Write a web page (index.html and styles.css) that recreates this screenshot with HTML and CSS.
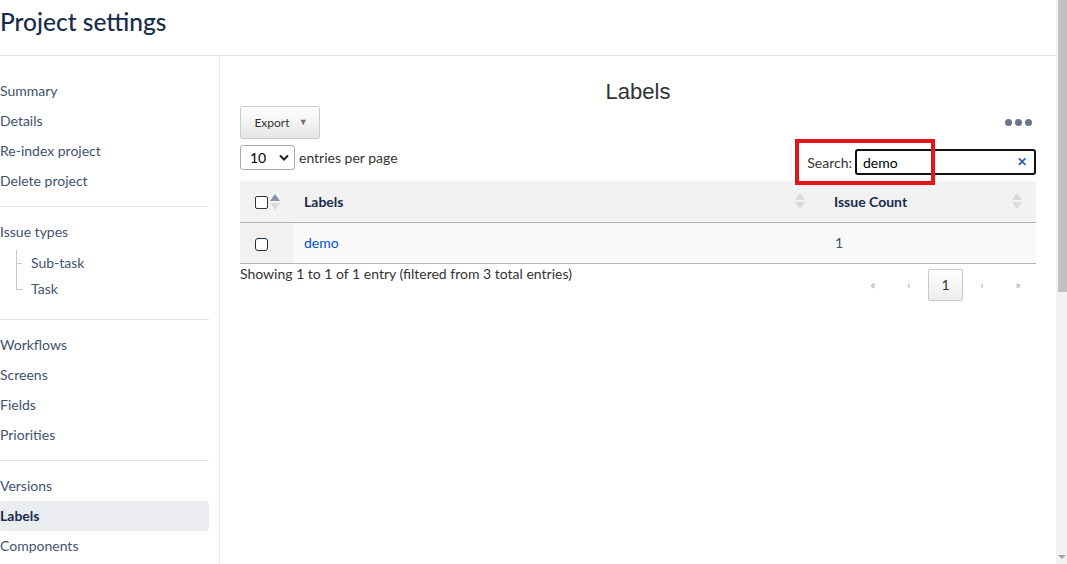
FILE: index.html
```html
<!DOCTYPE html>
<html lang="en">
<head>
    <meta charset="UTF-8">
    <meta name="viewport" content="width=device-width, initial-scale=1.0">
    <title>Project settings - Labels</title>
    <link rel="stylesheet" href="styles.css">
</head>
<body>
    <div class="page">
        <div class="page-header">
            <h1>Project settings</h1>
        </div>

        <div class="layout">
            <!-- Left navigation -->
            <nav class="sidebar">
                <ul class="nav-group">
                    <li>Summary</li>
                    <li>Details</li>
                    <li>Re-index project</li>
                    <li>Delete project</li>
                </ul>
                <ul class="nav-group">
                    <li>Issue types</li>
                    <li class="sub">
                        <ul class="tree">
                            <li>Sub-task</li>
                            <li>Task</li>
                        </ul>
                    </li>
                </ul>
                <ul class="nav-group">
                    <li>Workflows</li>
                    <li>Screens</li>
                    <li>Fields</li>
                    <li>Priorities</li>
                </ul>
                <ul class="nav-group last">
                    <li>Versions</li>
                    <li class="active">Labels</li>
                    <li>Components</li>
                </ul>
            </nav>

            <main class="main">
                <h2 class="title">Labels</h2>

                <div class="toolbar">
                    <button class="export-button">Export <span class="caret">&#9660;</span></button>
                    <span class="more-dots"><i></i><i></i><i></i></span>
                </div>

                <div class="controls">
                    <div class="length">
                        <span class="select-box">10 <svg width="10" height="7" viewBox="0 0 10 7"><path d="M1 1.5l4 4 4-4" fill="none" stroke="#222" stroke-width="2"/></svg></span>
                        entries per page
                    </div>
                    <div class="search">
                        <label>Search:</label>
                        <span class="search-input">demo<span class="clear">&#10005;</span></span>
                        <!-- annotation box drawn over the search field -->
                        <span class="highlight"></span>
                    </div>
                </div>

                <table class="labels-table">
                    <thead>
                        <tr>
                            <th class="check-col"><span class="checkbox"></span><span class="sort sort-up"></span></th>
                            <th class="label-col">Labels <span class="sort"></span></th>
                            <th>Issue Count <span class="sort"></span></th>
                        </tr>
                    </thead>
                    <tbody>
                        <tr>
                            <td class="check-col"><span class="checkbox"></span></td>
                            <td><a href="#">demo</a></td>
                            <td class="count">1</td>
                        </tr>
                    </tbody>
                </table>

                <div class="table-footer">
                    <div class="info">Showing 1 to 1 of 1 entry (filtered from 3 total entries)</div>
                    <div class="pager">
                        <span>&laquo;</span>
                        <span>&lsaquo;</span>
                        <span class="current">1</span>
                        <span>&rsaquo;</span>
                        <span>&raquo;</span>
                    </div>
                </div>
            </main>
        </div>
    </div>

    <div class="scrollbar">
        <div class="thumb"></div>
        <div class="arrow"></div>
    </div>
</body>
</html>
```

FILE: styles.css
```css
* {
    margin: 0;
    padding: 0;
    box-sizing: border-box;
}

html, body {
    height: 100%;
    overflow: hidden;
}

body {
    display: flex;
    font-family: Lato, "Noto Sans", sans-serif;
    font-size: 14px;
    color: #42526e;
    background-color: #fff;
}

.page {
    flex: 1;
    display: flex;
    flex-direction: column;
    min-width: 0;
}

.page-header {
    flex-shrink: 0;
    height: 56px;
    border-bottom: 1px solid #dfe1e6;
}

.page-header h1 {
    font-size: 24.5px;
    font-weight: 500;
    color: #172b4d;
    line-height: 44px;
}

.layout {
    flex: 1;
    display: flex;
}

/* Sidebar */
.sidebar {
    width: 220px;
    padding: 20px 10px 0 0;
    border-right: 1px solid #ebecf0;
}

.nav-group {
    list-style: none;
    border-bottom: 1px solid #dfe1e6;
    padding-bottom: 10px;
    margin-bottom: 10px;
}

.nav-group.last {
    border-bottom: none;
}

.nav-group > li {
    line-height: 30px;
    height: 30px;
    border-radius: 3px;
}

.nav-group > li.sub {
    height: auto;
    padding: 3px 0 19px 16px;
}

.nav-group > li.active {
    background-color: #ebecf0;
    color: #172b4d;
    font-weight: 700;
}

.tree {
    list-style: none;
    border-left: 1px solid #c1c7d0;
    height: 40px;
}

.tree li {
    position: relative;
    height: 26px;
    line-height: 26px;
    padding-left: 14px;
}

.tree li::before {
    content: "";
    position: absolute;
    left: 0;
    top: 13px;
    width: 5px;
    border-top: 1px solid #c1c7d0;
}

/* Main content */
.main {
    flex: 1;
    padding: 0 20px;
}

.title {
    font-family: "Liberation Sans", Arial, sans-serif;
    font-size: 22px;
    font-weight: 400;
    color: #333;
    text-align: center;
    line-height: 30px;
    padding-top: 21px;
    margin-bottom: -1px;
}

.toolbar {
    display: flex;
    justify-content: space-between;
    align-items: center;
}

.export-button {
    width: 80px;
    height: 33px;
    font-family: Lato, "Noto Sans", sans-serif;
    font-size: 12px;
    color: #333;
    background: linear-gradient(#fff, #e6e6e6);
    border: 1px solid #ccc;
    border-radius: 2px;
    padding: 0 0 1px 2px;
}

.caret {
    font-size: 9px;
    color: #707070;
    margin-left: 6px;
    vertical-align: 2px;
}

.more-dots {
    display: flex;
    gap: 3px;
    margin-right: 4px;
}

.more-dots i {
    width: 7px;
    height: 7px;
    border-radius: 50%;
    background-color: #6b778c;
}

.controls {
    display: flex;
    justify-content: space-between;
    align-items: flex-start;
    margin-top: 6px;
    height: 36px;
}

.length {
    display: flex;
    align-items: center;
    gap: 4px;
    color: #333;
}

.select-box {
    display: flex;
    align-items: center;
    justify-content: space-between;
    width: 55px;
    height: 25px;
    padding: 0 5px 0 9px;
    border: 1px solid #aaa;
    border-radius: 3px;
    color: #000;
    font-size: 14px;
}

.search {
    position: relative;
    display: flex;
    align-items: center;
    gap: 3px;
    margin-top: 4px;
    color: #333;
}

.search-input {
    position: relative;
    display: flex;
    align-items: center;
    width: 181px;
    height: 26px;
    padding-left: 6px;
    border: 2px solid #111;
    border-radius: 3px;
    color: #000;
}

.clear {
    position: absolute;
    right: 7px;
    top: 3px;
    font-size: 12px;
    font-weight: 700;
    color: #2a5db0;
}

.highlight {
    position: absolute;
    z-index: 2;
    left: -12px;
    top: -10px;
    width: 140px;
    height: 46px;
    border: 4px solid #e8141c;
    pointer-events: none;
}

/* Table */
.labels-table {
    width: 100%;
    border-collapse: collapse;
}

.labels-table th {
    position: relative;
    height: 41px;
    text-align: left;
    font-weight: 700;
    color: #172b4d;
    background-color: #f2f2f2;
    border-bottom: 1px solid #b4b4b4;
    padding: 0 11px;
}

.labels-table td {
    height: 41px;
    background-color: #f9f9f9;
    border-bottom: 1px solid #b4b4b4;
    padding: 0 11px;
    color: #42526e;
}

.labels-table .check-col {
    width: 53px;
    padding: 0 0 0 15px;
}

.labels-table td.check-col {
    background-color: #f1f1f1;
}

.labels-table .label-col {
    width: 530px;
}

.labels-table a {
    color: #0052cc;
    text-decoration: none;
}

.labels-table td.count {
    padding-left: 12px;
}

.checkbox {
    display: inline-block;
    width: 13px;
    height: 13px;
    border: 1px solid #333;
    border-radius: 2px;
    background-color: #fff;
    vertical-align: middle;
}

.labels-table td .checkbox {
    border-color: #1a2b48;
    border-radius: 3px;
}

/* sort arrows: up and down triangles */
.sort {
    position: absolute;
    right: 20px;
    top: 12px;
    width: 10px;
    height: 16px;
}

.sort::before,
.sort::after {
    content: "";
    position: absolute;
    left: 0;
    border-left: 5px solid transparent;
    border-right: 5px solid transparent;
}

.sort::before {
    top: 0;
    border-bottom: 7px solid #dadada;
}

.sort::after {
    bottom: 0;
    border-top: 7px solid #dadada;
}

.sort-up {
    position: relative;
    display: inline-block;
    right: auto;
    top: auto;
    vertical-align: middle;
    margin-left: 2px;
}

.sort-up::before {
    border-bottom-color: #8993a4;
}

.labels-table th.label-col .sort {
    right: 18px;
}

.labels-table th:last-child .sort {
    right: 14px;
}

.table-footer {
    display: flex;
    justify-content: space-between;
    align-items: flex-start;
}

.info {
    font-size: 14px;
    color: #333;
    padding-top: 1px;
}

.pager {
    display: flex;
    align-items: center;
    margin-top: 5px;
    color: #a5a5a5;
    font-size: 12px;
}

.pager span {
    width: 36px;
    text-align: center;
}

.pager .current {
    width: 35px;
    height: 32px;
    line-height: 30px;
    margin: 0 1px;
    font-size: 14px;
    color: #333;
    background: linear-gradient(#fff, #ececec);
    border: 1px solid #cacaca;
    border-radius: 2px;
}

/* Window scrollbar */
.scrollbar {
    width: 11px;
    display: flex;
    flex-direction: column;
    background-color: #f1f1f1;
}

.thumb {
    height: 292px;
    margin-left: 2px;
    background-color: #c1c1c1;
}

.arrow {
    margin: auto 0 5px 2px;
    width: 0;
    height: 0;
    border-left: 4px solid transparent;
    border-right: 4px solid transparent;
    border-top: 4px solid #a3a3a3;
}
```
